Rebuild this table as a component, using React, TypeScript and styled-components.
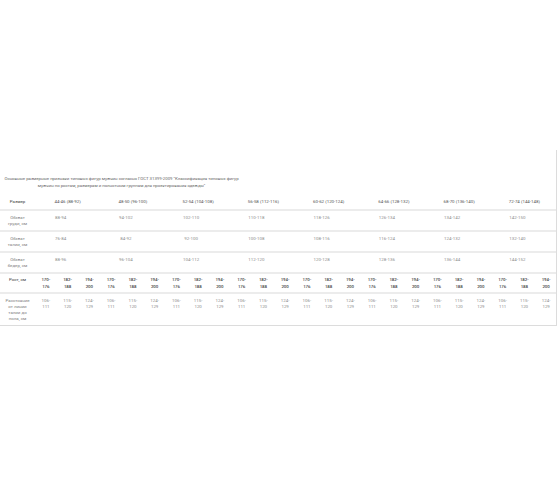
import React from 'react';
import styled, { createGlobalStyle } from 'styled-components';

const GlobalStyle = createGlobalStyle`
    html, body {
        margin: 0;
        padding: 0;
        background: #ffffff;
    }
    body {
        font-family: Roboto, "Liberation Sans", Arial, sans-serif;
    }
`;

const sizes = [
    '44-46 (88-92)',
    '48-50 (96-100)',
    '52-54 (104-108)',
    '56-58 (112-116)',
    '60-62 (120-124)',
    '64-66 (128-132)',
    '68-70 (136-140)',
    '72-74 (144-148)',
];

const girths = [
    { label: 'Обхват груди, см', values: ['88-94', '94-102', '102-110', '110-118', '118-126', '126-134', '134-142', '142-150'] },
    { label: 'Обхват талии, см', values: ['76-84', '84-92', '92-100', '100-108', '108-116', '116-124', '124-132', '132-140'] },
    { label: 'Обхват бедер, см', values: ['88-96', '96-104', '104-112', '112-120', '120-128', '128-136', '136-144', '144-152'] },
];

const heights = ['170-176', '182-188', '194-200'];
const lengths = ['106-111', '115-120', '124-129'];

const App = () => {
    return (
        <Page>
            <GlobalStyle />
            <Frame>
                <Caption>
                    Основные размерные признаки типовых фигур мужчин согласно ГОСТ 31399-2009 "Классификация типовых фигур
                    мужчин по ростам, размерам и полнотным группам для проектирования одежды"
                </Caption>

                <HeadRow>
                    <Label $dark>Размер</Label>
                    {sizes.map((s) => (
                        <SizeCell key={s}>{s}</SizeCell>
                    ))}
                </HeadRow>

                {girths.map((row) => (
                    <Row key={row.label}>
                        <Label>{row.label}</Label>
                        {row.values.map((v) => (
                            <ValueCell key={v}>{v}</ValueCell>
                        ))}
                    </Row>
                ))}

                <SplitRow>
                    <Label $dark>Рост, см</Label>
                    {sizes.flatMap((s) =>
                        heights.map((h) => (
                            <SubCell key={s + h} $dark>{h}</SubCell>
                        ))
                    )}
                </SplitRow>

                <SplitRow $last>
                    <Label>Расстояние от линии талии до пола, см</Label>
                    {sizes.flatMap((s) =>
                        lengths.map((l) => (
                            <SubCell key={s + l}>{l}</SubCell>
                        ))
                    )}
                </SplitRow>
            </Frame>
        </Page>
    );
};

export default App;


const Page = styled.div`
    width: 560px;
    height: 504px;
    padding-top: 150px;
    box-sizing: border-box;
    overflow: hidden;
`;

const Frame = styled.div`
    width: 557px;
    padding-top: 25px;
    border-right: 1px solid #dcdcdc;
    border-bottom: 1px solid #dcdcdc;
    box-sizing: border-box;
`;

const Caption = styled.div`
    width: 243px;
    text-align: center;
    font-size: 4.3px;
    line-height: 7px;
    color: #666;
    margin-bottom: 6px;
`;

const grid = `
    display: grid;
    grid-template-columns: 35px repeat(24, 21.75px);
    border-bottom: 2px solid #ececec;
    font-size: 4.4px;
`;

const HeadRow = styled.div`
    ${grid}
    align-items: center;
    padding: 4px 0;
    line-height: 6px;
`;

const Row = styled.div`
    ${grid}
    align-items: start;
    padding: 4px 0;
    line-height: 5.5px;
`;

const SplitRow = styled.div<{ $last?: boolean }>`
    ${grid}
    align-items: start;
    padding: ${(p) => (p.$last ? '4px 0 3px' : '3px 0 2px')};
    line-height: ${(p) => (p.$last ? '6px' : '6.5px')};
    ${(p) => (p.$last ? 'border-bottom: none;' : '')}
`;

const Label = styled.div<{ $dark?: boolean }>`
    text-align: center;
    padding: 0 5.5px;
    color: ${(p) => (p.$dark ? '#3a3a3a' : '#808080')};
`;

const SizeCell = styled.div`
    grid-column: span 3;
    text-align: center;
    color: #555;
`;

const ValueCell = styled.div`
    grid-column: span 3;
    text-align: center;
    padding-right: 14px;
    color: #8c8c8c;
`;

const SubCell = styled.div<{ $dark?: boolean }>`
    text-align: center;
    padding: 0 4px;
    color: ${(p) => (p.$dark ? '#444' : '#8c8c8c')};
    font-weight: ${(p) => (p.$dark ? 500 : 400)};
`;
